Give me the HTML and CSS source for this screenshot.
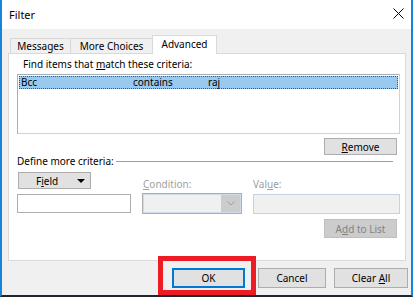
FILE: index.html
```html
<!DOCTYPE html>
<html>
<head>
<meta charset="utf-8">
<title>Filter</title>
<link rel="stylesheet" href="styles.css">
</head>
<body>
<div class="window">
  <div class="titlebar">
    <span class="title">Filter</span>
    <svg class="close" width="11" height="11" viewBox="0 0 11 11"><path d="M0.5 0.5 L10.5 10.5 M10.5 0.5 L0.5 10.5" stroke="#000" stroke-width="1" fill="none"/></svg>
  </div>
  <div class="body">
    <div class="tabs">
      <div class="tab tab-messages">Messages</div>
      <div class="tab tab-more">More Choices</div>
      <div class="tab tab-adv active">Advanced</div>
    </div>
    <div class="panel">
      <div class="find-label">Find items that <u>m</u>atch these criteria:</div>
      <div class="list">
        <div class="row selected">
          <span class="c1">Bcc</span><span class="c2">contains</span><span class="c3">raj</span>
        </div>
      </div>
      <div class="btn-row"><button class="btn btn-remove"><u>R</u>emove</button></div>
      <div class="define"><span>Define more criteria:</span><div class="rule"></div></div>
      <div class="criteria">
        <button class="btn btn-field"><span>F<u>i</u>eld</span><svg width="8" height="4" viewBox="0 0 8 4"><path d="M0 0 L8 0 L4 4 Z" fill="#000"/></svg></button>
        <div class="dlabel cond-label"><u>C</u>ondition:</div>
        <div class="dlabel val-label">Val<u>u</u>e:</div>
        <div class="textbox"></div>
        <div class="combo"><div class="combo-field"></div><div class="combo-drop"><svg width="8" height="5" viewBox="0 0 8 5"><path d="M0.5 0.5 L4 4 L7.5 0.5" stroke="#a0a0a0" stroke-width="1" fill="none"/></svg></div></div>
        <div class="valuebox"></div>
      </div>
      <div class="btn-row add-row"><button class="btn btn-add" disabled>A<u>d</u>d to List</button></div>
    </div>
    <div class="footer">
      <div class="ok-wrap"><button class="btn btn-ok">OK</button></div>
      <button class="btn btn-cancel">Cancel</button>
      <button class="btn btn-clear">Clear <u>A</u>ll</button>
    </div>
  </div>
</div>
</body>
</html>
```
FILE: styles.css
```css
* { box-sizing: border-box; }
html, body { margin: 0; padding: 0; background: #fff; }
body {
  font-family: "Noto Sans", "Liberation Sans", sans-serif;
  font-size: 10px;
  color: #000;
}
u { text-decoration: underline; text-underline-offset: 1px; }

.window {
  width: 413px;
  height: 297px;
  border-left: 2px solid #1883d7;
  border-right: 2px solid #1883d7;
  border-bottom: 2px solid #1e2530;
  display: flex;
  flex-direction: column;
}
.titlebar {
  height: 29px;
  flex: none;
  background: #fff;
  display: flex;
  align-items: center;
  justify-content: space-between;
  padding: 0 7px 1px 7px;
}
.title { font-size: 11px; }
.close { margin-top: -2px; }

.body {
  flex: 1;
  background: #f0f0f0;
  padding-top: 6px;
  display: flex;
  flex-direction: column;
}
.tabs {
  display: flex;
  align-items: flex-end;
  height: 18px;
  padding-left: 8px;
}
.tab {
  height: 15px;
  line-height: 14px;
  border: 1px solid #d9d9d9;
  border-bottom: none;
  background: #f0f0f0;
  text-align: center;
  white-space: nowrap;
  margin-left: -1px;
}
.tab-messages { width: 61px; margin-left: 0; }
.tab-more { width: 83px; }
.tab-adv { width: 65px; }
.tab.active {
  height: 19px;
  margin-bottom: -1px;
  padding-top: 1px;
  background: #fff;
  position: relative;
  z-index: 1;
}

.panel {
  margin-left: 6px;
  width: 398px;
  height: 208px;
  flex: none;
  background: #fff;
  border: 1px solid #d9d9d9;
  padding: 3px 5px 0 8px;
}
.find-label { line-height: 14px; padding-left: 6px; }
.list {
  margin-top: 3px;
  height: 60px;
  border: 1px solid #abadb3;
  border-right-color: #c5d5e8;
  border-bottom-color: #c5d5e8;
  padding: 1px;
}
.row {
  height: 13px;
  line-height: 11px;
  display: flex;
  padding-left: 1px;
  white-space: nowrap;
}
.row.selected {
  background: #99c9ef;
  border: 1px dotted #6b4a2a;
}
.c1 { width: 112px; }
.c2 { width: 75px; }

.btn {
  font-family: inherit;
  font-size: 10px;
  color: #000;
  background: #e1e1e1;
  border: 1px solid #adadad;
  padding: 0;
  margin: 0;
  line-height: 14px;
}
.btn-row { display: flex; justify-content: flex-end; margin-top: 4px; }
.btn-remove { width: 73px; height: 17px; margin-right: 3px; }

.define {
  height: 12px;
  line-height: 12px;
  display: flex;
  align-items: center;
  gap: 2px;
}
.rule { flex: 1; height: 1px; background: #a0a0a0; margin-right: 7px; }

.criteria {
  margin-top: 5px;
  display: grid;
  grid-template-columns: 114px 100px 147px;
  grid-template-rows: 21px 21px;
  column-gap: 11px;
}
.btn-field {
  width: 73px;
  height: 17px;
  margin-left: 1px;
  align-self: start;
  display: flex;
  align-items: center;
  padding: 0 5px 0 17px;
  justify-content: space-between;
}
.dlabel {
  align-self: end;
  line-height: 14px;
  margin-bottom: 2px;
  color: #a0a0a0;
}
.cond-label { padding-left: 1px; }
.textbox {
  margin-top: 1px;
  height: 19px;
  background: #fff;
  border: 1px solid #adadad;
}
.combo {
  height: 21px;
  display: flex;
  border: 1px solid #adadad;
  box-shadow: inset 0 0 0 1px #cfdcec;
  background: #f0f0f0;
}
.combo-field { flex: 1; }
.combo-drop {
  width: 19px;
  margin: 1px 1px 1px 0;
  background: #cccccc;
  display: flex;
  align-items: center;
  justify-content: center;
}
.valuebox {
  margin-top: 1px;
  height: 20px;
  background: #f0f0f0;
  border: 1px solid #c3d3e6;
}
.add-row { margin-top: 5px; }
.btn-add {
  width: 73px;
  height: 19px;
  margin-right: 3px;
  background: #cccccc;
  border-color: #bfbfbf;
  color: #838383;
}

.footer {
  display: flex;
  justify-content: flex-end;
  margin-top: 7px;
  padding-right: 3px;
}
.footer .btn { height: 20px; }
.ok-wrap { position: relative; display: flex; }
.ok-wrap::after {
  content: "";
  position: absolute;
  left: -14px;
  top: -12px;
  right: -11px;
  bottom: -7px;
  border: 5px solid #ed1c24;
}
.btn-ok { width: 73px; border: 2px solid #0078d7; }
.btn-cancel { width: 68px; margin-left: 13px; }
.btn-clear { width: 74px; margin-left: 8px; }
```
